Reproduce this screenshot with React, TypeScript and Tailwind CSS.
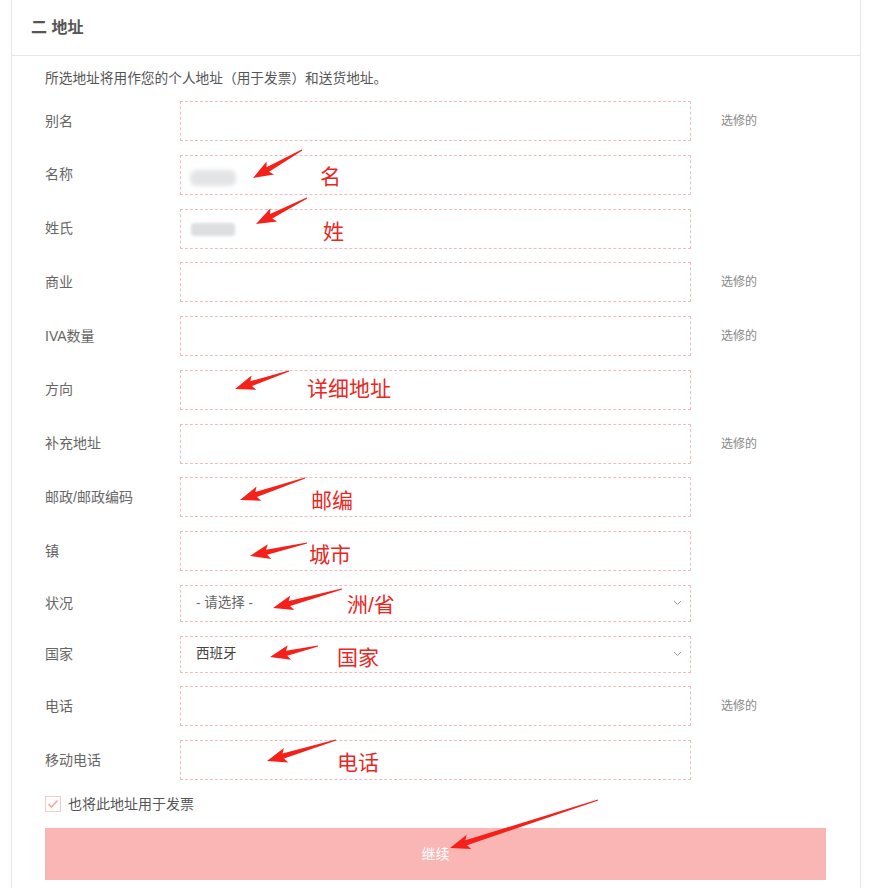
const font = { fontFamily: '"Liberation Sans", "Noto Sans CJK SC", sans-serif' };

type Field = {
  label: string;
  kind?: "input" | "select";
  value?: string;
  placeholder?: boolean;
  optional?: boolean;
  blur?: "name" | "surname";
};

const fields: Field[] = [
  { label: "别名", optional: true },
  { label: "名称", blur: "name" },
  { label: "姓氏", blur: "surname" },
  { label: "商业", optional: true },
  { label: "IVA数量", optional: true },
  { label: "方向" },
  { label: "补充地址", optional: true },
  { label: "邮政/邮政编码" },
  { label: "镇" },
  { label: "状况", kind: "select", value: "- 请选择 -", placeholder: true },
  { label: "国家", kind: "select", value: "西班牙" },
  { label: "电话", optional: true },
  { label: "移动电话" },
];

// annotation arrows: tail -> head, in page pixels
const arrows = [
  [302, 150, 253, 178],
  [307, 198, 256, 224],
  [289, 371, 235, 389],
  [305, 478, 240, 500],
  [307, 543, 250, 556],
  [342, 589, 273, 608],
  [318, 646, 270, 657],
  [336, 740, 267, 761],
  [598, 800, 450, 848],
];

const notes = [
  { text: "名", x: 320, y: 166 },
  { text: "姓", x: 323, y: 221 },
  { text: "详细地址", x: 307, y: 378 },
  { text: "邮编", x: 311, y: 490 },
  { text: "城市", x: 309, y: 544 },
  { text: "洲/省", x: 347, y: 594 },
  { text: "国家", x: 337, y: 647 },
  { text: "电话", x: 337, y: 752 },
];

function arrowPoints(tx: number, ty: number, hx: number, hy: number) {
  const dx = hx - tx;
  const dy = hy - ty;
  const len = Math.hypot(dx, dy);
  const ux = dx / len;
  const uy = dy / len;
  const nx = -uy;
  const ny = ux;
  const headLen = Math.min(17, len * 0.35);
  const bx = hx - ux * headLen;
  const by = hy - uy * headLen;
  const p = (x: number, y: number) => `${x.toFixed(1)},${y.toFixed(1)}`;
  return [
    p(tx + nx * 0.6, ty + ny * 0.6),
    p(bx + nx * 2.6, by + ny * 2.6),
    p(bx - ux * 3 + nx * 7.5, by - uy * 3 + ny * 7.5),
    p(hx, hy),
    p(bx - ux * 3 - nx * 7.5, by - uy * 3 - ny * 7.5),
    p(bx - nx * 2.6, by - ny * 2.6),
    p(tx - nx * 0.6, ty - ny * 0.6),
  ].join(" ");
}

function Control({ f }: { f: Field }) {
  if (f.kind === "select") {
    return (
      <div className="flex h-[37px] w-[511px] items-center justify-between border border-dashed border-[#efbcbc] pl-[15px] pr-[8px]">
        <span className={`text-[13.5px] ${f.placeholder ? "text-[#666]" : "text-[#444]"}`}>{f.value}</span>
        <svg width="9" height="6" viewBox="0 0 9 6" fill="none" stroke="#999" strokeWidth="1">
          <polyline points="1,1 4.5,4.5 8,1" />
        </svg>
      </div>
    );
  }
  return (
    <div className="flex h-[40px] w-[511px] items-center border border-dashed border-[#efbcbc] pl-[8px]">
      {f.blur === "name" && <div className="ml-[1px] mt-[7px] h-[16px] w-[46px] rounded-[6px] bg-[#e3e4e6] blur-[2px]" />}
      {f.blur === "surname" && <div className="ml-[2px] mt-[2px] h-[13px] w-[44px] rounded-[3px] bg-[#dcdee0] blur-[1.5px]" />}
    </div>
  );
}

export default function App() {
  return (
    <div className="relative h-[888px] w-[870px] overflow-hidden bg-white" style={font}>
      <div className="ml-[11px] w-[850px] border-x border-[#e6e6e6]">
        <div className="flex h-[56px] items-center border-b border-[#e6e6e6] pl-[19px]">
          <h2 className="text-[16px] font-bold text-[#555]">二 地址</h2>
        </div>
        <div className="pl-[33px] pb-[20px]">
          <p className="mt-[13px] text-[13.7px] leading-[20px] text-[#555]">所选地址将用作您的个人地址（用于发票）和送货地址。</p>
          <div className="mt-[12px] flex flex-col gap-[13.75px]">
            {fields.map((f) => (
              <div key={f.label} className="flex items-center">
                <span className="w-[135px] text-[14px] text-[#666]">{f.label}</span>
                <Control f={f} />
                {f.optional && <span className="ml-[30px] text-[12px] text-[#888]">选修的</span>}
              </div>
            ))}
          </div>
          <label className="mt-[16px] flex h-[16px] items-center gap-[7px]">
            <span className="flex h-[16px] w-[16px] items-center justify-center border border-[#f3caca] bg-white">
              <svg width="12" height="10" viewBox="0 0 12 10" fill="none" stroke="#f2a8a8" strokeWidth="1.6">
                <polyline points="1.5,5 4.5,8 10.5,1.5" />
              </svg>
            </span>
            <span className="text-[14px] text-[#555]">也将此地址用于发票</span>
          </label>
          <button className="mt-[16px] flex h-[52px] w-[781px] items-center justify-center bg-[#fab6b5] text-[14px] text-white">
            继续
          </button>
        </div>
      </div>

      <svg className="pointer-events-none absolute left-0 top-0" width="870" height="888">
        {arrows.map(([tx, ty, hx, hy], i) => (
          <polygon key={i} points={arrowPoints(tx, ty, hx, hy)} fill="#f5201a" />
        ))}
      </svg>
      {notes.map((n) => (
        <span
          key={n.text}
          className="absolute text-[21px] leading-none text-[#e8281f]"
          style={{ left: n.x, top: n.y }}
        >
          {n.text}
        </span>
      ))}
    </div>
  );
}
